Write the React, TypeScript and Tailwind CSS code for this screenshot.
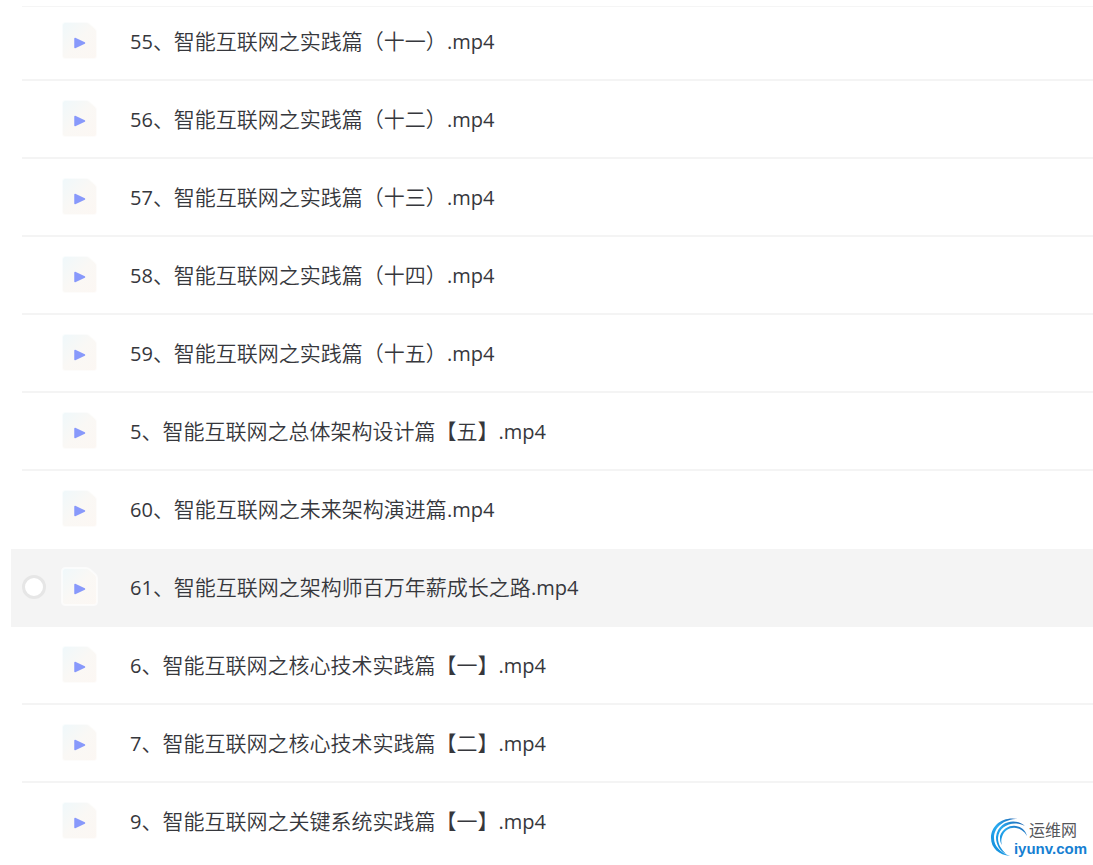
import { useState } from "react"

type VideoFile = {
  index: string
  title: string
}

const files: VideoFile[] = [
  { index: "55", title: "、智能互联网之实践篇（十一）" },
  { index: "56", title: "、智能互联网之实践篇（十二）" },
  { index: "57", title: "、智能互联网之实践篇（十三）" },
  { index: "58", title: "、智能互联网之实践篇（十四）" },
  { index: "59", title: "、智能互联网之实践篇（十五）" },
  { index: "5", title: "、智能互联网之总体架构设计篇【五】" },
  { index: "60", title: "、智能互联网之未来架构演进篇" },
  { index: "61", title: "、智能互联网之架构师百万年薪成长之路" },
  { index: "6", title: "、智能互联网之核心技术实践篇【一】" },
  { index: "7", title: "、智能互联网之核心技术实践篇【二】" },
  { index: "9", title: "、智能互联网之关键系统实践篇【一】" },
]

function VideoIcon() {
  return (
    <svg className="h-10 w-10 shrink-0" viewBox="0 0 40 40" aria-hidden="true">
      <defs>
        <linearGradient id="sheet" x1="0" y1="0" x2="1" y2="1">
          <stop offset="0" stopColor="#eff8fb" />
          <stop offset="0.5" stopColor="#faf8f5" />
          <stop offset="1" stopColor="#fcf7f3" />
        </linearGradient>
      </defs>
      <path
        d="M5.500 1H26q2 0 3.500 1.300l6 5.200q1.500 1.400 1.500 3.500V34.500q0 3.500-3.500 3.500h-28q-3.500 0-3.500-3.500v-30Q2 1 5.500 1z"
        fill="url(#sheet)"
        stroke="#fff"
        strokeOpacity="0.6"
        strokeWidth="2"
      />
      <path d="M15 17.500v9l9.500-4.500z" fill="#8899fb" stroke="#8899fb" strokeWidth="1.500" strokeLinejoin="round" />
    </svg>
  )
}

function Watermark() {
  return (
    <div className="absolute right-1.5 bottom-2 flex items-end font-['Liberation_Sans','Noto_Sans_CJK_SC',sans-serif]">
      <svg className="h-10 w-10" viewBox="0 0 40 40" aria-hidden="true">
        <defs>
          <linearGradient id="swirl" x1="1" y1="0" x2="0" y2="1">
            <stop offset="0" stopColor="#1c5fae" />
            <stop offset="0.5" stopColor="#2aabf0" />
            <stop offset="1" stopColor="#0b86d6" />
          </linearGradient>
        </defs>
        <g fill="url(#swirl)">
          <path d="M28 2C13-1 1 8 1 21C1 31 9 38 20 39C10 35 4 29 4 21C4 10 14 2 28 2z" />
          <path d="M35 9C27 1 8 3 6 20C6 28 10 34 16 37C11 32 8 27 8 21C9 8 24 3 35 9z" />
          <path d="M37 19C34 6 15 5 10 19C10 23 10 25 12 28C11 25 11 23 12 20C16 8 31 8 37 19z" />
        </g>
      </svg>
      <div className="-ml-4 flex flex-col items-end gap-0.5">
        <span className="pr-2.5 text-base leading-4 text-[#55565a]">运维网</span>
        <span className="text-[15px] leading-4 font-bold text-[#167fd2]">iyunv.com</span>
      </div>
    </div>
  )
}

export default function App() {
  const [hovered, setHovered] = useState("61")
  const [selected, setSelected] = useState("")

  return (
    <main className="relative min-h-screen bg-white pt-1.5 pl-[11px] font-['Open_Sans','Noto_Sans_CJK_SC',sans-serif] text-[#36373c]">
      <div className="ml-[11px] border-t border-[#f5f5f5]" />
      <ul>
        {files.map((file, i) => {
          const active = hovered === file.index
          const beforeActive = files[i + 1]?.index === hovered
          return (
            <li
              key={file.index}
              className={`group h-[78px] first:h-[74px] ${active ? "bg-[#f4f4f4]" : ""}`}
              onMouseEnter={() => setHovered(file.index)}
            >
              <label
                className={`ml-[11px] flex h-full items-center border-b-2 group-first:pb-1 group-last:border-transparent ${beforeActive ? "border-transparent" : "border-[#f4f4f4]"}`}
              >
                <input
                  type="radio"
                  name="file"
                  className={`size-6 shrink-0 appearance-none rounded-full border-[3px] border-[#e6e6e6] bg-white checked:bg-[#8899fb] ${active ? "" : "opacity-0"}`}
                  checked={selected === file.index}
                  onChange={() => setSelected(file.index)}
                />
                <span className="ml-3.5">
                  <VideoIcon />
                </span>
                <span className="ml-[30px] flex items-baseline pt-0.5 text-xl whitespace-nowrap">
                  <span>{file.index}</span>
                  <span className="text-[21px] font-[350]">{file.title}</span>
                  <span>.mp4</span>
                </span>
              </label>
            </li>
          )
        })}
      </ul>
      <Watermark />
    </main>
  )
}
